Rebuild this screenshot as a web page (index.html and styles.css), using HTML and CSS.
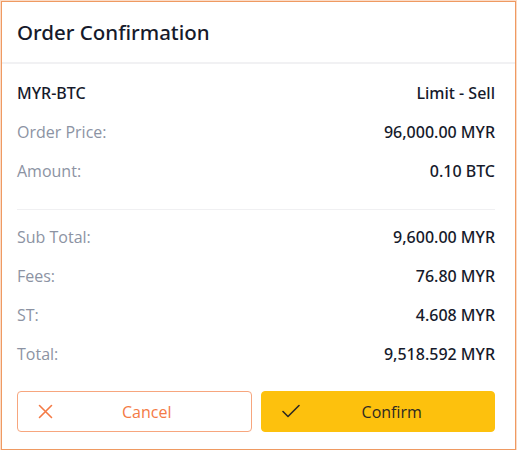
FILE: index.html
```html
<!DOCTYPE html>
<html>
<head>
<meta charset="utf-8">
<link rel="stylesheet" href="styles.css">
</head>
<body>
<div class="card">
  <div class="header">Order Confirmation</div>
  <div class="body">
    <div class="group">
      <div class="row"><span class="label strong">MYR-BTC</span><span class="value">Limit - Sell</span></div>
      <div class="row"><span class="label">Order Price:</span><span class="value">96,000.00 MYR</span></div>
      <div class="row"><span class="label">Amount:</span><span class="value">0.10 BTC</span></div>
    </div>
    <div class="divider"></div>
    <div class="group">
      <div class="row"><span class="label">Sub Total:</span><span class="value">9,600.00 MYR</span></div>
      <div class="row"><span class="label">Fees:</span><span class="value">76.80 MYR</span></div>
      <div class="row"><span class="label">ST:</span><span class="value">4.608 MYR</span></div>
      <div class="row"><span class="label">Total:</span><span class="value">9,518.592 MYR</span></div>
    </div>
    <div class="actions">
      <button class="btn btn-cancel">
        <svg class="icon" width="15" height="15" viewBox="0 0 15 15"><path d="M1.5 1.5 L13.5 13.5 M13.5 1.5 L1.5 13.5" stroke="#f47a45" stroke-width="1.6" fill="none" stroke-linecap="round"/></svg>
        <span class="btn-text">Cancel</span>
      </button>
      <button class="btn btn-confirm">
        <svg class="icon" width="18" height="15" viewBox="0 0 18 15"><path d="M1 7.5 L6 12.5 L17 1.5" stroke="#2d2a22" stroke-width="1.6" fill="none" stroke-linecap="round" stroke-linejoin="round"/></svg>
        <span class="btn-text">Confirm</span>
      </button>
    </div>
  </div>
</div>
</body>
</html>
```
FILE: styles.css
```css
* { box-sizing: border-box; }
html, body { margin: 0; padding: 0; background: #ffffff; }
body { font-family: "Open Sans", "Noto Sans", sans-serif; }
.card {
  margin: 1px 0 0 1px;
  width: 515px;
  height: 449px;
  border: 1px solid #ef9a62;
  box-shadow: 0 0 0 1px #fbdcc8;
  background: #fff;
  display: flex;
  flex-direction: column;
}
.header {
  height: 62px;
  padding-left: 15px;
  display: flex;
  align-items: center;
  font-family: "Noto Sans", "Open Sans", sans-serif;
  font-size: 20.5px;
  font-weight: 500;
  color: #161a2b;
  border-bottom: 2px solid #f1f1f3;
}
.body {
  padding: 9px 20px 0 15px;
  display: flex;
  flex-direction: column;
}
.row {
  height: 39px;
  display: flex;
  justify-content: space-between;
  align-items: center;
  font-size: 16px;
}
.label { color: #8c93a3; }
.label.strong, .value {
  color: #161a2b;
  font-family: "Noto Sans", "Open Sans", sans-serif;
  font-weight: 500;
}
.divider {
  margin: 19px 0 7px;
  height: 1px;
  background: #f0f0f2;
}
.actions {
  margin-top: 18px;
  display: flex;
  gap: 9px;
}
.btn {
  flex: 1;
  height: 41px;
  border-radius: 4px;
  display: flex;
  align-items: center;
  padding: 0 10px 0 20px;
  font-family: inherit;
  font-size: 16px;
  cursor: pointer;
}
.btn-text { flex: 1; text-align: center; }
.btn-cancel {
  background: #fff;
  border: 1px solid #f7a67e;
  color: #f47a45;
}
.btn-confirm {
  background: #fdc10d;
  border: 1px solid #fdc10d;
  color: #2d2a22;
}
.icon { display: block; flex: none; }
```
